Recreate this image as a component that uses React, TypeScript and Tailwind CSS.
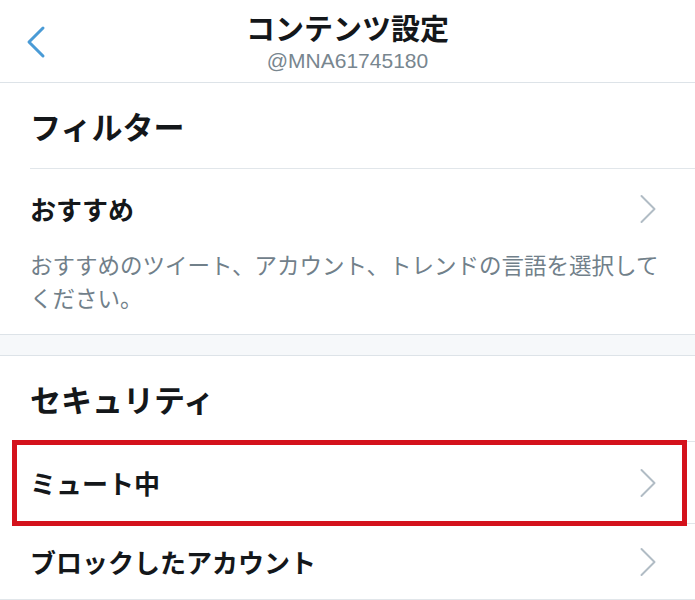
import React from "react";

const FONT = { fontFamily: '"Noto Sans CJK JP", "Noto Sans", sans-serif' };

function ChevronRight() {
  return (
    <svg width="18" height="30" viewBox="0 0 18 30" fill="none" className="shrink-0">
      <path d="M2.5 2 L15.5 15 L2.5 28" stroke="#b1bcc5" strokeWidth="2" strokeLinecap="round" strokeLinejoin="round" />
    </svg>
  );
}

function ChevronLeft() {
  return (
    <svg width="22" height="34" viewBox="0 0 22 34" fill="none">
      <path d="M18 3 L4 17 L18 31" stroke="#4a9bd6" strokeWidth="3" strokeLinecap="round" strokeLinejoin="round" />
    </svg>
  );
}

function SectionTitle({ children }: { children: React.ReactNode }) {
  return (
    <div className="flex h-[85px] items-center pl-[30px]">
      <h2 className="text-[31px] font-bold leading-none text-[#14171a]">{children}</h2>
    </div>
  );
}

function Row({ label, height = "h-[82px]" }: { label: string; height?: string }) {
  return (
    <div className={"ml-[30px] flex items-center justify-between border-t border-[#e1e6ea] pr-[38px] " + height}>
      <span className="text-[26px] font-semibold leading-none text-[#14171a]">{label}</span>
      <ChevronRight />
    </div>
  );
}

export default function App() {
  return (
    <div className="h-[600px] w-[695px] overflow-hidden bg-white" style={FONT}>
      <header className="relative flex h-[83px] flex-col items-center border-b border-[#dde3e8]">
        <button type="button" className="absolute left-[25px] top-[25px]">
          <ChevronLeft />
        </button>
        <h1 className="mt-[9px] text-[29px] font-bold leading-[36px] text-[#14171a]">コンテンツ設定</h1>
        <p className="mt-[3px] text-[21px] leading-[26px] text-[#78868f]" style={{ fontFamily: '"Liberation Sans", "Noto Sans CJK JP", sans-serif' }}>
          @MNA61745180
        </p>
      </header>

      <SectionTitle>フィルター</SectionTitle>
      <Row label="おすすめ" height="h-[80px]" />
      <p className="pb-[20px] pl-[30px] pr-[18px] text-[22.5px] leading-[33px] text-[#71808a]">
        おすすめのツイート、アカウント、トレンドの言語を選択してください。
      </p>

      <div className="h-[22px] border-y border-[#dde3e8] bg-[#f6f8fa]" />

      <SectionTitle>セキュリティ</SectionTitle>
      <div className="relative">
        <Row label="ミュート中" />
        <div className="pointer-events-none absolute -top-[1px] bottom-[-3px] left-[12px] right-[8px] border-[5px] border-[#d4121c]" />
      </div>
      <div className="border-b border-[#e1e6ea]">
        <Row label="ブロックしたアカウント" height="h-[76px]" />
      </div>
    </div>
  );
}
